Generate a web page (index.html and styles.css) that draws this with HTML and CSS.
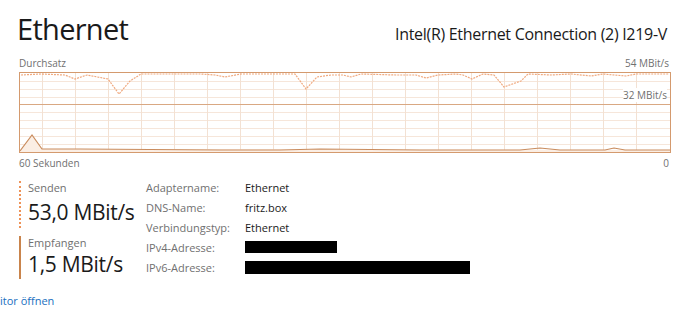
FILE: index.html
```html
<!DOCTYPE html>
<html lang="de">
<head>
    <meta charset="UTF-8">
    <meta name="viewport" content="width=device-width, initial-scale=1.0">
    <title>Ethernet</title>
    <link rel="stylesheet" href="styles.css">
</head>
<body>

    <!-- Header -->
    <div class="header">
        <h1>Ethernet</h1>
        <div class="adapter">Intel(R) Ethernet Connection (2) I219-V</div>
    </div>

    <!-- Throughput graph -->
    <div class="graph-caption">
        <span>Durchsatz</span>
        <span>54 MBit/s</span>
    </div>
    <div class="graph">
        <svg width="650" height="79" viewBox="0 0 650 79">
            <g class="minor">
                <line x1="0" y1="8.5" x2="650" y2="8.5"/>
                <line x1="0" y1="16.5" x2="650" y2="16.5"/>
                <line x1="0" y1="24.5" x2="650" y2="24.5"/>
                <line x1="0" y1="39.5" x2="650" y2="39.5"/>
                <line x1="0" y1="47.5" x2="650" y2="47.5"/>
                <line x1="0" y1="55.5" x2="650" y2="55.5"/>
                <line x1="0" y1="63.5" x2="650" y2="63.5"/>
                <line x1="0" y1="71.5" x2="650" y2="71.5"/>
            </g>
            <g class="vert">
                <line x1="22.5" y1="0" x2="22.5" y2="79"/>
                <line x1="55.5" y1="0" x2="55.5" y2="79"/>
                <line x1="88.5" y1="0" x2="88.5" y2="79"/>
                <line x1="121.5" y1="0" x2="121.5" y2="79"/>
                <line x1="154.5" y1="0" x2="154.5" y2="79"/>
                <line x1="187.5" y1="0" x2="187.5" y2="79"/>
                <line x1="220.5" y1="0" x2="220.5" y2="79"/>
                <line x1="253.5" y1="0" x2="253.5" y2="79"/>
                <line x1="286.5" y1="0" x2="286.5" y2="79"/>
                <line x1="319.5" y1="0" x2="319.5" y2="79"/>
                <line x1="352.5" y1="0" x2="352.5" y2="79"/>
                <line x1="385.5" y1="0" x2="385.5" y2="79"/>
                <line x1="418.5" y1="0" x2="418.5" y2="79"/>
                <line x1="451.5" y1="0" x2="451.5" y2="79"/>
                <line x1="484.5" y1="0" x2="484.5" y2="79"/>
                <line x1="517.5" y1="0" x2="517.5" y2="79"/>
                <line x1="550.5" y1="0" x2="550.5" y2="79"/>
                <line x1="583.5" y1="0" x2="583.5" y2="79"/>
                <line x1="616.5" y1="0" x2="616.5" y2="79"/>
            </g>
            <line class="major" x1="0" y1="31.5" x2="650" y2="31.5"/>

            <!-- receive -->
            <polygon class="recv-fill" points="0,78 12,62 22,76 650,77 650,79 0,79"/>
            <polyline class="recv" points="0,78 12,62 22,76 60,76 200,77 260,77 300,76 400,77 500,77 520,75 540,77 585,77 594,75 605,77 650,77"/>

            <!-- send -->
            <polyline class="send" points="1,2 21,1 45,2 55,6 67,2 88,6 99,21 110,8 121,1 141,1 181,1 195,2 205,4 221,1 243,1 275,1 286,16 297,4 311,2 323,2 331,4 341,1 376,2 396,2 406,5 418,2 436,1 443,2 452,6 463,1 474,2 484,14 501,8 508,1 531,2 551,1 571,3 583,1 606,3 616,1 649,1"/>
        </svg>
        <span class="scale-mid">32 MBit/s</span>
    </div>
    <div class="graph-caption bottom">
        <span>60 Sekunden</span>
        <span>0</span>
    </div>

    <!-- Stats and details -->
    <div class="details">
        <div class="stats">
            <div class="stat send-stat">
                <div class="stat-label">Senden</div>
                <div class="stat-value">53,0 MBit/s</div>
            </div>
            <div class="stat recv-stat">
                <div class="stat-label">Empfangen</div>
                <div class="stat-value">1,5 MBit/s</div>
            </div>
        </div>

        <div class="props">
            <span class="prop-label">Adaptername:</span>
            <span class="prop-value">Ethernet</span>
            <span class="prop-label">DNS-Name:</span>
            <span class="prop-value">fritz.box</span>
            <span class="prop-label">Verbindungstyp:</span>
            <span class="prop-value">Ethernet</span>
            <span class="prop-label">IPv4-Adresse:</span>
            <span class="prop-value"><span class="redacted ipv4"></span></span>
            <span class="prop-label">IPv6-Adresse:</span>
            <span class="prop-value"><span class="redacted ipv6"></span></span>
        </div>
    </div>

    <a class="monitor-link" href="#">itor öffnen</a>

</body>
</html>
```

FILE: styles.css
```css
body {
    font-family: "Open Sans", "Noto Sans", sans-serif;
    background: #fff;
    color: #1a1a1a;
    margin: 0;
    width: 686px;
    height: 313px;
    overflow: hidden;
}

/* Header */
.header {
    display: flex;
    justify-content: space-between;
    align-items: baseline;
    padding: 9px 19px 0 17px;
    height: 47px;
}
.header h1 {
    font-size: 29px;
    font-weight: 400;
    margin: 0;
    letter-spacing: -0.7px;
}
.adapter {
    font-size: 16px;
    letter-spacing: -0.3px;
}

/* Graph */
.graph-caption {
    display: flex;
    justify-content: space-between;
    padding: 0 17px 0 19px;
    font-size: 10px;
    color: #707070;
    height: 16px;
    line-height: 14px;
}
.graph-caption.bottom {
    height: 20px;
    line-height: 20px;
}

.graph {
    position: relative;
    margin-left: 19px;
    width: 650px;
    height: 79px;
    border: 1px solid #d49a6e;
    box-sizing: content-box;
}
.graph svg {
    display: block;
}
.minor line {
    stroke: #f6e6da;
    stroke-width: 1;
}
.vert line {
    stroke: #f3e1d3;
    stroke-width: 1;
}
.major {
    stroke: #d9a883;
    stroke-width: 1;
}
.send {
    fill: none;
    stroke: #f0aa80;
    stroke-width: 1.2;
    stroke-dasharray: 2 1;
}
.recv {
    fill: none;
    stroke: #c98c5e;
    stroke-width: 1.2;
}
.recv-fill {
    fill: #fbeee4;
}
.scale-mid {
    position: absolute;
    right: 3px;
    top: 15px;
    font-size: 10px;
    color: #707070;
    background: #fff;
}

/* Details */
.details {
    display: flex;
    padding: 8px 0 0 19px;
    height: 104px;
}
.stats {
    width: 127px;
}
.stat {
    padding-left: 7px;
}
.send-stat {
    border-left: 2px dotted #ee9257;
    height: 47px;
    margin-bottom: 8px;
}
.recv-stat {
    border-left: 2px solid #c9844c;
    height: 43px;
}
.stat-label {
    font-size: 11px;
    color: #707070;
    line-height: 14px;
}
.stat-value {
    font-size: 21px;
    line-height: 28px;
    letter-spacing: -0.3px;
}
.send-stat .stat-value {
    padding-top: 3px;
}

.props {
    display: grid;
    grid-template-columns: 99px auto;
    grid-auto-rows: 20px;
    align-items: center;
    font-size: 11px;
    margin-top: -4px;
}
.prop-label {
    color: #707070;
}
.prop-value {
    color: #1a1a1a;
}
.redacted {
    display: block;
    background: #000;
}
.ipv4 {
    width: 92px;
    height: 12px;
}
.ipv6 {
    width: 225px;
    height: 13px;
}

.monitor-link {
    display: block;
    font-size: 11px;
    color: #1a6fc0;
    text-decoration: none;
    line-height: 16px;
    margin-top: 8px;
}
```
